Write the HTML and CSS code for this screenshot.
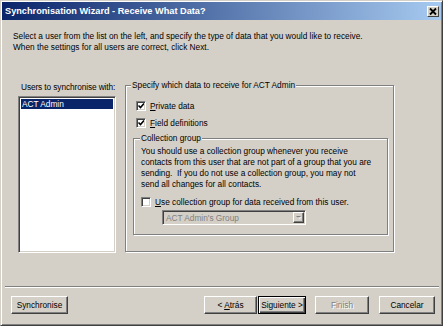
FILE: index.html
```html
<!DOCTYPE html>
<html lang="en">
<head>
  <meta charset="UTF-8">
  <title>Synchronisation Wizard - Receive What Data?</title>
  <link rel="stylesheet" href="styles.css">
</head>
<body>
  <div class="window">
    <div class="titlebar">
      <span class="title">Synchronisation Wizard - Receive What Data?</span>
      <span class="close-btn">
        <svg width="10" height="9" viewBox="0 0 10 9"><path d="M2 1.5 L8 7.5 M8 1.5 L2 7.5" stroke="#000" stroke-width="1.8"/></svg>
      </span>
    </div>

    <p class="intro">Select a user from the list on the left, and specify the type of data that you would like to receive.<br>When the settings for all users are correct, click Next.</p>

    <div class="main">
      <div class="users">
        <div class="users-label">Users to synchronise with:</div>
        <div class="listbox">
          <div class="list-item selected">ACT Admin</div>
        </div>
      </div>

      <fieldset class="group">
        <legend>Specify which data to receive for ACT Admin</legend>
        <div class="check-row"><span class="checkbox checked"></span><span><u>P</u>rivate data</span></div>
        <div class="check-row"><span class="checkbox checked"></span><span><u>F</u>ield definitions</span></div>

        <fieldset class="group inner">
          <legend>Collection group</legend>
          <p class="note">You should use a collection group whenever you receive<br>contacts from this user that are not part of a group that you are<br>sending.&nbsp; If you do not use a collection group, you may not<br>send all changes for all contacts.</p>
          <div class="check-row"><span class="checkbox"></span><span><u>U</u>se collection group for data received from this user.</span></div>
          <div class="combo">
            <span class="combo-text">ACT Admin's Group</span>
            <span class="combo-btn">
              <svg width="7" height="5" viewBox="0 0 7 5"><path d="M1 1 L6 1 L3.5 3.5 Z" fill="#808080"/><path d="M2 2 L7 2 L4.5 4.5 Z" fill="#fff" opacity="0.6"/></svg>
            </span>
          </div>
        </fieldset>
      </fieldset>
    </div>

    <div class="separator"></div>

    <div class="buttons">
      <button class="btn btn-sync">Synchronise</button>
      <div class="nav">
        <button class="btn btn-back">&lt; <u>A</u>trás</button>
        <button class="btn btn-next default">Siguiente &gt;</button>
        <button class="btn btn-finish" disabled>Finish</button>
        <button class="btn btn-cancel">Cancelar</button>
      </div>
    </div>
  </div>
</body>
</html>
```

FILE: styles.css
```css
body {
  margin: 0;
  font-family: "Liberation Sans", Arial, sans-serif;
  font-size: 8.3px;
  color: #000;
  background: #d4d0c8;
}

.window {
  width: 443px;
  height: 326px;
  box-sizing: border-box;
  background: #d4d0c8;
  border: 1px solid;
  border-color: #d4d0c8 #404040 #404040 #d4d0c8;
  box-shadow: inset 1px 1px #fff, inset -1px -1px #808080;
  padding: 1px;
}

.titlebar {
  height: 18px;
  display: flex;
  align-items: center;
  justify-content: space-between;
  padding-left: 3px;
  background: linear-gradient(to right, #0a246a, #a6caf0);
}

.title {
  color: #fff;
  font-weight: bold;
  font-size: 9.2px;
}

.close-btn {
  width: 12px;
  height: 11px;
  margin-right: 2px;
  box-sizing: border-box;
  display: flex;
  align-items: center;
  justify-content: center;
  background: #d4d0c8;
  border: 1px solid;
  border-color: #fff #404040 #404040 #fff;
}

.intro {
  margin: 0;
  padding: 11px 0 0 11px;
  line-height: 11px;
}

.main {
  display: flex;
  align-items: flex-start;
  gap: 9px;
  margin-top: 27px;
  padding-left: 16px;
}

.users {
  width: 98px;
}

.users-label {
  line-height: 11px;
  margin: 2px 0 3px 3px;
  white-space: nowrap;
  letter-spacing: -0.1px;
}

.listbox {
  height: 157px;
  box-sizing: border-box;
  background: #fff;
  border: 1px solid;
  border-color: #808080 #fff #fff #808080;
  box-shadow: inset 1px 1px #404040, inset -1px -1px #d4d0c8;
  padding: 2px;
}

.list-item {
  line-height: 10px;
  padding-left: 1px;
}

.list-item.selected {
  background: #0a246a;
  color: #fff;
}

.group {
  margin: 0;
  width: 255px;
  padding: 8px 5px 16px 7px;
  border: 1px solid #808080;
  box-shadow: inset 1px 1px #fff, 1px 1px #fff;
}

.group legend {
  padding: 0 1px;
  margin-left: -2px;
  line-height: 11px;
  background: #d4d0c8;
}

.check-row {
  display: flex;
  align-items: center;
  gap: 4px;
  height: 13px;
  margin-bottom: 4px;
  padding-left: 3px;
}

.checkbox {
  width: 10px;
  height: 10px;
  box-sizing: border-box;
  background: #fff;
  border: 1px solid;
  border-color: #808080 #fff #fff #808080;
  box-shadow: inset 1px 1px #404040, inset -1px -1px #d4d0c8;
}

.checkbox.checked {
  background: #fff url("data:image/svg+xml;utf8,<svg xmlns='http://www.w3.org/2000/svg' width='8' height='8'><path d='M1.5 3.5 L3.5 5.5 L7 1.5' stroke='black' stroke-width='1.6' fill='none'/></svg>") center / 8px 8px no-repeat;
}

.group.inner {
  width: 239px;
  margin-top: 1px;
  padding: 2px 7px 9px 7px;
}

.group.inner legend {
  margin-left: -1px;
}

.note {
  margin: 0 0 5px;
  line-height: 11px;
}

.group.inner .check-row {
  padding-left: 0;
  margin-bottom: 2px;
}

.combo {
  width: 144px;
  height: 15px;
  box-sizing: border-box;
  margin-left: 21px;
  display: flex;
  align-items: center;
  justify-content: space-between;
  background: #d4d0c8;
  border: 1px solid;
  border-color: #808080 #fff #fff #808080;
  box-shadow: inset 1px 1px #404040, inset -1px -1px #d4d0c8;
  padding: 1px;
}

.combo-text {
  color: #808080;
  padding-left: 2px;
}

.combo-btn {
  width: 11px;
  height: 11px;
  box-sizing: border-box;
  display: flex;
  align-items: center;
  justify-content: center;
  border: 1px solid;
  border-color: #fff #404040 #404040 #fff;
  box-shadow: inset -1px -1px #808080;
}

.separator {
  margin: 33px 2px 0 3px;
  border-top: 1px solid #808080;
  border-bottom: 1px solid #fff;
}

.buttons {
  display: flex;
  justify-content: space-between;
  margin-top: 8px;
  padding: 0 6px 0 9px;
}

.nav {
  display: flex;
}

.btn {
  height: 18px;
  box-sizing: border-box;
  padding: 0;
  font-family: inherit;
  font-size: inherit;
  color: #000;
  background: #d4d0c8;
  border: 1px solid;
  border-color: #fff #404040 #404040 #fff;
  box-shadow: inset -1px -1px #808080;
}

.btn-sync {
  width: 57px;
}

.btn-back {
  width: 53px;
}

.btn-next {
  width: 48px;
  margin-left: 1px;
}

.btn-next.default {
  border-color: #000;
  box-shadow: inset 1px 1px #fff, inset -1px -1px #404040, inset -2px -2px #808080;
}

.btn-finish {
  width: 54px;
  margin-left: 9px;
  color: #808080;
  text-shadow: 1px 1px #fff;
}

.btn-cancel {
  width: 56px;
  margin-left: 10px;
}
```
